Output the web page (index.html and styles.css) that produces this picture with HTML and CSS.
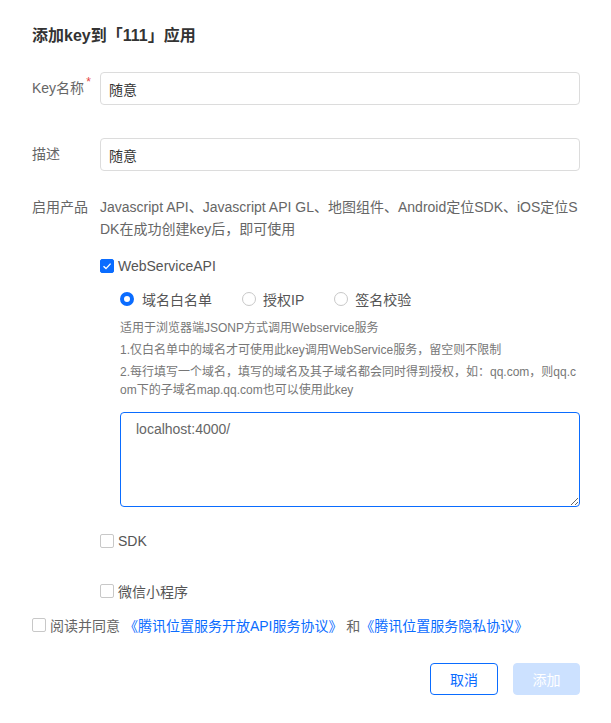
FILE: index.html
```html
<!DOCTYPE html>
<html lang="zh-CN">
<head>
<meta charset="utf-8">
<title>添加key</title>
<link rel="stylesheet" href="styles.css">
</head>
<body>
<div class="dialog">
  <h2 class="title">添加key到「111」应用</h2>

  <div class="row row-key">
    <label class="label">Key名称<span class="req">*</span></label>
    <div class="field"><input class="input" type="text" value="随意"></div>
  </div>

  <div class="row row-desc">
    <label class="label">描述</label>
    <div class="field"><input class="input" type="text" value="随意"></div>
  </div>

  <div class="row row-products">
    <label class="label">启用产品</label>
    <div class="field">
      <p class="products-text">Javascript API、Javascript API GL、地图组件、Android定位SDK、iOS定位SDK在成功创建key后，即可使用</p>

      <div class="check-line first-check">
        <span class="cb cb-on"><svg viewBox="0 0 14 14" width="14" height="14"><path d="M3.5 7.2 L6 9.6 L10.6 4.6" fill="none" stroke="#fff" stroke-width="1.4"/></svg></span>
        <span class="cb-text">WebServiceAPI</span>
      </div>

      <div class="sub">
        <div class="radios">
          <span class="radio-item"><span class="radio radio-on"></span><span class="radio-text">域名白名单</span></span>
          <span class="radio-item"><span class="radio"></span><span class="radio-text">授权IP</span></span>
          <span class="radio-item"><span class="radio"></span><span class="radio-text">签名校验</span></span>
        </div>
        <div class="tips">
          <p>适用于浏览器端JSONP方式调用Webservice服务</p>
          <p>1.仅白名单中的域名才可使用此key调用WebService服务，留空则不限制</p>
          <p>2.每行填写一个域名，填写的域名及其子域名都会同时得到授权，如：qq.com，则qq.com下的子域名map.qq.com也可以使用此key</p>
        </div>
        <textarea class="textarea">localhost:4000/</textarea>
      </div>

      <div class="check-line sdk-check">
        <span class="cb"></span>
        <span class="cb-text">SDK</span>
      </div>

      <div class="check-line mp-check">
        <span class="cb"></span>
        <span class="cb-text">微信小程序</span>
      </div>
    </div>
  </div>

  <div class="agree">
    <span class="cb"></span>
    <span class="agree-text">阅读并同意 <a class="link">《腾讯位置服务开放API服务协议》</a> 和<a class="link">《腾讯位置服务隐私协议》</a></span>
  </div>

  <div class="footer">
    <button class="btn btn-cancel">取消</button>
    <button class="btn btn-add">添加</button>
  </div>
</div>
</body>
</html>
```

FILE: styles.css
```css
* { box-sizing: border-box; }
html, body { margin: 0; padding: 0; background: #fff; }
body {
  font-family: "Liberation Sans", "Noto Sans CJK SC", sans-serif;
  font-size: 14px;
  color: #666;
}
.dialog {
  width: 611px;
  padding: 24px 31px 0 32px;
}
.title {
  margin: 0;
  font-size: 16px;
  line-height: 24px;
  font-weight: bold;
  color: #333;
}
.row {
  display: flex;
  align-items: flex-start;
}
.row-key { margin-top: 24px; }
.row-desc { margin-top: 33px; }
.row-products { margin-top: 25px; }
.label {
  width: 68px;
  flex: none;
  line-height: 33px;
  color: #666;
  white-space: nowrap;
}
.row-products .label { line-height: 22px; }
.req {
  color: #e54545;
  font-size: 12px;
  vertical-align: top;
  line-height: 20px;
  margin-left: 2px;
}
.field { flex: 1; min-width: 0; }
.input {
  display: block;
  width: 100%;
  height: 33px;
  border: 1px solid #dcdcdc;
  border-radius: 4px;
  padding: 0 8px;
  font: inherit;
  font-size: 14px;
  color: #333;
  outline: none;
}
.products-text {
  margin: 0;
  line-height: 22px;
  word-break: break-all;
  color: #666;
}
.check-line {
  display: flex;
  align-items: center;
  height: 22px;
}
.first-check { margin-top: 15px; }
.sdk-check { margin-top: 23px; }
.mp-check { margin-top: 28px; }
.cb {
  width: 14px;
  height: 14px;
  border: 1px solid #c8c8c8;
  border-radius: 2px;
  background: #fff;
  flex: none;
  display: inline-flex;
}
.cb-on {
  background: #0a6cff;
  border-color: #0a6cff;
}
.cb-on svg { margin: -1px; }
.cb-text {
  margin-left: 4px;
  color: #555;
}
.sub { padding-left: 20px; }
.radios {
  display: flex;
  align-items: center;
  height: 22px;
  margin-top: 11px;
}
.radio-item {
  display: inline-flex;
  align-items: center;
  margin-right: 30px;
}
.radio {
  width: 14px;
  height: 14px;
  border-radius: 50%;
  border: 1px solid #c8c8c8;
  background: #fff;
  flex: none;
}
.radio-on {
  border: 4px solid #0a6cff;
}
.radio-text {
  margin-left: 8px;
  color: #555;
}
.radio-item:nth-child(2) .radio-text,
.radio-item:nth-child(3) .radio-text { margin-left: 7px; }
.tips {
  margin-top: 9px;
  font-size: 12px;
  line-height: 18px;
  color: #777;
}
.tips p {
  margin: 0 0 4px;
  word-break: break-all;
}
.tips p:last-child { margin-bottom: 0; }
.textarea {
  display: block;
  width: 100%;
  height: 95px;
  margin-top: 13px;
  border: 1px solid #0a6cff;
  border-radius: 4px;
  padding: 6px 15px;
  font: inherit;
  font-size: 14px;
  line-height: 20px;
  color: #666;
  outline: none;
  resize: vertical;
}
.agree {
  display: flex;
  align-items: center;
  height: 22px;
  margin-top: 12px;
}
.agree-text {
  margin-left: 4px;
  color: #666;
  white-space: nowrap;
}
.link {
  color: #0a6cff;
  text-decoration: none;
  cursor: pointer;
}
.footer {
  display: flex;
  justify-content: flex-end;
  gap: 15px;
  margin-top: 27px;
}
.btn {
  width: 68px;
  height: 32px;
  border-radius: 4px;
  font: inherit;
  font-size: 14px;
  cursor: pointer;
}
.btn-cancel {
  background: #fff;
  border: 1px solid #0a6cff;
  color: #0a6cff;
}
.btn-add {
  width: 67px;
  background: #cce1ff;
  border: 1px solid #cce1ff;
  color: #fff;
}
```
